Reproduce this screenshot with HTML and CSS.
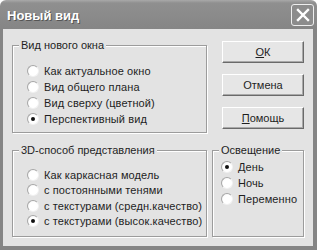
FILE: index.html
```html
<!DOCTYPE html>
<html lang="ru">
<head>
    <meta charset="UTF-8">
    <title>Новый вид</title>
    <link rel="stylesheet" href="styles.css">
</head>
<body>
<div class="window">
    <div class="titlebar">
        <span class="title">Новый вид</span>
        <span class="close">
            <svg width="14" height="14" viewBox="0 0 14 14">
                <path d="M2 2 L12 12 M12 2 L2 12" stroke="#fff" stroke-width="2.4" stroke-linecap="square"/>
            </svg>
        </span>
    </div>
    <div class="frame">
        <fieldset class="group group-view">
            <legend>Вид нового окна</legend>
            <div class="options">
                <label class="option"><span class="radio"></span>Как актуальное окно</label>
                <label class="option"><span class="radio"></span>Вид общего плана</label>
                <label class="option"><span class="radio"></span>Вид сверху (цветной)</label>
                <label class="option"><span class="radio checked"></span>Перспективный вид</label>
            </div>
        </fieldset>

        <div class="buttons">
            <button class="btn"><u>О</u>К</button>
            <button class="btn">Отмена</button>
            <button class="btn"><u>П</u>омощь</button>
        </div>

        <fieldset class="group group-3d">
            <legend>3D-способ представления</legend>
            <div class="options">
                <label class="option"><span class="radio"></span>Как каркасная модель</label>
                <label class="option"><span class="radio"></span>с постоянными тенями</label>
                <label class="option"><span class="radio"></span>с текстурами (средн.качество)</label>
                <label class="option"><span class="radio checked"></span>с текстурами (высок.качество)</label>
            </div>
        </fieldset>

        <fieldset class="group group-light">
            <legend>Освещение</legend>
            <div class="options">
                <label class="option"><span class="radio checked"></span>День</label>
                <label class="option"><span class="radio"></span>Ночь</label>
                <label class="option"><span class="radio"></span>Переменно</label>
            </div>
        </fieldset>
    </div>
</div>
</body>
</html>
```

FILE: styles.css
```css
:root {
    --face: #e3e3e3;
    --frame: #858585;
    --text: #1e1e1e;
    --etch-dark: #9c9c9c;
}

body {
    margin: 0;
    background: #fff;
    font-family: 'Liberation Sans', Arial, sans-serif;
    font-size: 11px;
    color: var(--text);
}

.window {
    width: 317px;
    height: 250px;
}

.titlebar {
    height: 29px;
    display: flex;
    align-items: center;
    justify-content: space-between;
    padding: 0 3px 0 7px;
    box-sizing: border-box;
    background: linear-gradient(#a9a9a9 0, #8f8f8f 3px, #8a8a8a 60%, #858585 100%);
    border-radius: 6px 6px 0 0;
}

.title {
    font-size: 13px;
    font-weight: bold;
    color: #fff;
    text-shadow: 1px 1px 0 #555;
    padding-top: 1px;
}

.close {
    width: 21px;
    height: 20px;
    display: flex;
    align-items: center;
    justify-content: center;
    border: 1px solid #eee;
    border-radius: 3px;
    background: #8c8c8c;
}

.frame {
    height: 221px;
    box-sizing: border-box;
    background: var(--face);
    border-left: 3px solid var(--frame);
    border-right: 4px solid var(--frame);
    border-bottom: 4px solid var(--frame);
    padding: 10px 9px 0 9px;
    display: grid;
    grid-template-columns: 195px 92px;
    grid-template-rows: 94px 93px;
    column-gap: 5px;
    row-gap: 11px;
}

.group {
    margin: 0;
    padding: 0;
    min-width: 0;
    box-sizing: border-box;
    border: 1px solid var(--etch-dark);
    box-shadow: 1px 1px 0 #fff, inset 1px 1px 0 #fff;
}

.group legend {
    margin-left: 6px;
    padding: 0 2px;
    line-height: 13px;
    background: var(--face);
}

.options {
    display: flex;
    flex-direction: column;
    padding: 11px 0 0 14px;
}

.group-3d .options {
    padding-top: 10px;
}

.group-light .options {
    padding: 2px 0 0 8px;
}

.option {
    display: flex;
    align-items: center;
    gap: 5px;
    height: 16px;
    white-space: nowrap;
    letter-spacing: 0.1px;
}

.group-3d .option {
    height: 15.5px;
}

.radio {
    width: 12px;
    height: 12px;
    flex: none;
    box-sizing: border-box;
    border-radius: 50%;
    border: 1px solid;
    border-color: #a8a8a8 #f2f2f2 #f2f2f2 #a8a8a8;
    background: radial-gradient(circle at 60% 60%, #fff 55%, #ececec 100%);
    display: flex;
    align-items: center;
    justify-content: center;
}

.radio.checked::after {
    content: "";
    width: 4px;
    height: 4px;
    border-radius: 50%;
    background: #111;
}

.buttons {
    display: flex;
    flex-direction: column;
    gap: 11px;
    padding: 2px 0 0 10px;
}

.btn {
    width: 82px;
    height: 22px;
    padding: 0;
    font: inherit;
    color: var(--text);
    background: #e6e6e6;
    border: 1px solid;
    border-color: #fff #6a6a6a #6a6a6a #fff;
    box-shadow: inset -1px -1px 0 #a9a9a9;
}

.btn u {
    text-decoration-thickness: 1px;
    text-underline-offset: 1px;
}
```
